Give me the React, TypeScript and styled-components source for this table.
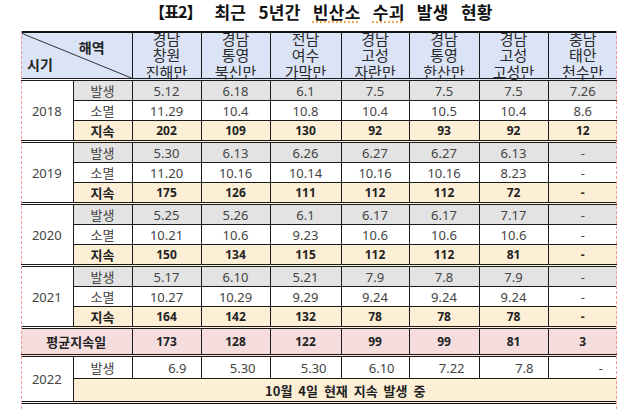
import React from "react";
import styled, { createGlobalStyle, css } from "styled-components";

const Global = createGlobalStyle`
  html, body { margin: 0; padding: 0; background: #ffffff; }
  body { font-family: "Noto Sans", "Noto Sans CJK KR", sans-serif; color: #3a3a3a; }
`;

const Page = styled.div`
  width: 640px;
  height: 410px;
  overflow: hidden;
  display: flex;
  flex-direction: column;
`;

const Title = styled.h1`
  margin: 0;
  height: 31px;
  display: flex;
  justify-content: center;
  align-items: center;
  gap: 13px;
  padding-left: 2px;
  font-family: "Noto Sans CJK KR", sans-serif;
  font-weight: 700;
  font-size: 17px;
  color: #111;
  box-sizing: border-box;
  padding-bottom: 9px;
`;

const Tag = styled.span`
  font-size: 16px;
  letter-spacing: -1px;
`;

const Heading = styled.span`
  word-spacing: 8px;
  letter-spacing: 0.3px;
`;

const Flagged = styled.span`
  text-decoration: underline dotted #f0a040;
  text-underline-offset: 3px;
`;

const Sheet = styled.div`
  position: relative;
  margin-left: 21px;
  width: 596px;
  &::before, &::after {
    content: "";
    position: absolute;
    top: 0;
    bottom: -20px;
    width: 0;
    border-left: 1px dashed #f29a9a;
    z-index: 2;
  }
  &::before { left: 0; }
  &::after { right: 0; }
`;

const Table = styled.table`
  border-collapse: collapse;
  table-layout: fixed;
  width: 596px;
  border-top: 2px solid #111;
  border-bottom: 3px double #111;
  font-size: 13px;
`;

type Tone = "gray" | "white" | "cream" | "pink" | "blue";
const bg: Record<Tone, string> = {
  gray: "#e3e3e3",
  white: "#ffffff",
  cream: "#fcefd6",
  pink: "#f5dddd",
  blue: "#dbe3f6",
};

const cellBase = css`
  border: 1px solid #1a1a1a;
  padding: 0;
  text-align: center;
  vertical-align: middle;
  white-space: nowrap;
  &:first-child { border-left: none; }
  &:last-child { border-right: none; }
`;

const Row = styled.tr<{ $h: number; $split?: boolean }>`
  height: ${(p) => p.$h}px;
  ${(p) =>
    p.$split &&
    css`
      & > td, & > th { border-top: 3px double #1a1a1a; }
    `}
`;

const HeadRow = styled.tr`
  height: 45px;
  & > th { border-bottom: 3px double #1a1a1a; border-top: none; }
`;

const HeadCell = styled.th`
  ${cellBase};
  background: ${bg.blue};
  font-family: "Noto Sans CJK KR", sans-serif;
  font-weight: 400;
  font-size: 15px;
  color: #2a2a2a;
`;

const HeadStack = styled.div`
  height: 45px;
  display: flex;
  flex-direction: column;
  justify-content: center;
  align-items: center;
  line-height: 16.5px;
`;

const HeadLine = styled.span`
  display: block;
`;

const CornerCell = styled.th`
  ${cellBase};
  position: relative;
  background: ${bg.blue};
  font-family: "Noto Sans CJK KR", sans-serif;
  font-weight: 700;
  font-size: 14px;
  color: #222;
`;

const CornerInner = styled.div`
  height: 45px;
  display: grid;
  grid-template-rows: 1fr 1fr;
  padding: 0 6px;
  line-height: 16px;
`;

const Region = styled.span`
  justify-self: end;
  align-self: end;
  margin-right: 21px;
  margin-bottom: 1px;
`;

const Period = styled.span`
  justify-self: start;
  align-self: start;
  margin-top: 0px;
`;

const Diagonal = styled.svg`
  position: absolute;
  inset: 0;
  width: 100%;
  height: 100%;
  pointer-events: none;
`;

const YearCell = styled.td`
  ${cellBase};
  background: #fff;
  color: #444;
  font-size: 13px;
`;

const LabelCell = styled.td<{ $tone: Tone; $bold?: boolean }>`
  ${cellBase};
  background: ${(p) => bg[p.$tone]};
  font-family: "Noto Sans CJK KR", sans-serif;
  font-size: 13px;
  font-weight: ${(p) => (p.$bold ? 700 : 400)};
  color: ${(p) => (p.$bold ? "#222" : "#444")};
`;

const ValueCell = styled.td<{ $tone: Tone; $bold?: boolean; $right?: boolean }>`
  ${cellBase};
  background: ${(p) => bg[p.$tone]};
  font-size: ${(p) => (p.$bold ? "12px" : "13px")};
  font-weight: ${(p) => (p.$bold ? 700 : 400)};
  color: ${(p) => (p.$bold ? "#222" : "#444")};
  ${(p) =>
    p.$right &&
    css`
      text-align: right;
      padding-right: 14px;
    `}
`;

const NoteCell = styled.td`
  ${cellBase};
  background: ${bg.cream};
  font-family: "Noto Sans CJK KR", sans-serif;
  font-weight: 700;
  font-size: 13px;
  color: #222;
  word-spacing: 3px;
`;

const regions = [
  ["경남", "창원", "진해만"],
  ["경남", "통영", "북신만"],
  ["전남", "여수", "가막만"],
  ["경남", "고성", "자란만"],
  ["경남", "통영", "한산만"],
  ["경남", "고성", "고성만"],
  ["충남", "태안", "천수만"],
];

const widths = [52, 59, 69, 69, 71, 68, 70, 69, 69];

type Block = { year: string; occur: string[]; vanish: string[]; last: string[] };

const blocks: Block[] = [
  {
    year: "2018",
    occur: ["5.12", "6.18", "6.1", "7.5", "7.5", "7.5", "7.26"],
    vanish: ["11.29", "10.4", "10.8", "10.4", "10.5", "10.4", "8.6"],
    last: ["202", "109", "130", "92", "93", "92", "12"],
  },
  {
    year: "2019",
    occur: ["5.30", "6.13", "6.26", "6.27", "6.27", "6.13", "-"],
    vanish: ["11.20", "10.16", "10.14", "10.16", "10.16", "8.23", "-"],
    last: ["175", "126", "111", "112", "112", "72", "-"],
  },
  {
    year: "2020",
    occur: ["5.25", "5.26", "6.1", "6.17", "6.17", "7.17", "-"],
    vanish: ["10.21", "10.6", "9.23", "10.6", "10.6", "10.6", "-"],
    last: ["150", "134", "115", "112", "112", "81", "-"],
  },
  {
    year: "2021",
    occur: ["5.17", "6.10", "5.21", "7.9", "7.8", "7.9", "-"],
    vanish: ["10.27", "10.29", "9.29", "9.24", "9.24", "9.24", "-"],
    last: ["164", "142", "132", "78", "78", "78", "-"],
  },
];

const average = ["173", "128", "122", "99", "99", "81", "3"];
const occur2022 = ["6.9", "5.30", "5.30", "6.10", "7.22", "7.8", "-"];

export default function App() {
  return (
    <Page>
      <Global />
      <Title>
        <Tag>【표2】</Tag>
        <Heading>
          최근 5년간 <Flagged>빈산소</Flagged> <Flagged>수괴</Flagged> 발생 현황
        </Heading>
      </Title>
      <Sheet>
        <Table>
          <colgroup>
            {widths.map((w, i) => (
              <col key={i} style={{ width: w }} />
            ))}
          </colgroup>
          <thead>
            <HeadRow>
              <CornerCell colSpan={2}>
                <Diagonal viewBox="0 0 100 100" preserveAspectRatio="none">
                  <line x1="0" y1="0" x2="100" y2="100" stroke="#333" strokeWidth="1" vectorEffect="non-scaling-stroke" />
                </Diagonal>
                <CornerInner>
                  <Region>해역</Region>
                  <Period>시기</Period>
                </CornerInner>
              </CornerCell>
              {regions.map((r, i) => (
                <HeadCell key={i}>
                  <HeadStack>
                    {r.map((l, j) => (
                      <HeadLine key={j}>{l}</HeadLine>
                    ))}
                  </HeadStack>
                </HeadCell>
              ))}
            </HeadRow>
          </thead>
          <tbody>
            {blocks.map((b, bi) => (
              <React.Fragment key={b.year}>
                <Row $h={20} $split={bi > 0}>
                  <YearCell rowSpan={3}>{b.year}</YearCell>
                  <LabelCell $tone="gray">발생</LabelCell>
                  {b.occur.map((v, i) => (
                    <ValueCell key={i} $tone="gray">{v}</ValueCell>
                  ))}
                </Row>
                <Row $h={20}>
                  <LabelCell $tone="white">소멸</LabelCell>
                  {b.vanish.map((v, i) => (
                    <ValueCell key={i} $tone="white">{v}</ValueCell>
                  ))}
                </Row>
                <Row $h={20}>
                  <LabelCell $tone="cream" $bold>지속</LabelCell>
                  {b.last.map((v, i) => (
                    <ValueCell key={i} $tone="cream" $bold>{v}</ValueCell>
                  ))}
                </Row>
              </React.Fragment>
            ))}
            <Row $h={28} $split>
              <LabelCell $tone="pink" $bold colSpan={2}>평균지속일</LabelCell>
              {average.map((v, i) => (
                <ValueCell key={i} $tone="pink" $bold>{v}</ValueCell>
              ))}
            </Row>
            <Row $h={23} $split>
              <YearCell rowSpan={2}>2022</YearCell>
              <LabelCell $tone="white">발생</LabelCell>
              {occur2022.map((v, i) => (
                <ValueCell key={i} $tone="white" $right>{v}</ValueCell>
              ))}
            </Row>
            <Row $h={24}>
              <NoteCell colSpan={8}>10월 4일 현재 지속 발생 중</NoteCell>
            </Row>
          </tbody>
        </Table>
      </Sheet>
    </Page>
  );
}
